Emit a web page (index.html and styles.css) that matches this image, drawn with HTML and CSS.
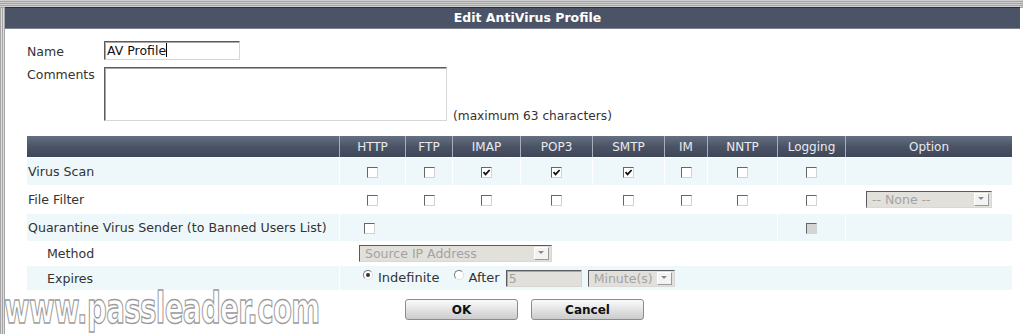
FILE: index.html
```html
<!DOCTYPE html>
<html lang="en">
<head>
  <meta charset="UTF-8">
  <title>Edit AntiVirus Profile</title>
  <link rel="stylesheet" href="styles.css">
</head>
<body>
  <div class="topbar"></div>
  <div class="frame">
    <div class="edge"></div>
    <div class="dialog">
      <div class="title">Edit AntiVirus Profile</div>
      <div class="content">
        <div class="meta">
          <span class="lbl">Name</span>
          <div class="field name">AV Profile<span class="caret"></span></div>
          <span class="lbl lbl-top">Comments</span>
          <div class="comments">
            <div class="field area"></div>
            <span class="hint">(maximum 63 characters)</span>
          </div>
        </div>

        <table class="grid">
          <colgroup>
            <col class="c-label"><col class="c-http"><col class="c-ftp"><col class="c-imap"><col class="c-pop3">
            <col class="c-smtp"><col class="c-im"><col class="c-nntp"><col class="c-log"><col class="c-opt">
          </colgroup>
          <thead>
            <tr>
              <th class="first"></th><th>HTTP</th><th>FTP</th><th>IMAP</th><th>POP3</th>
              <th>SMTP</th><th>IM</th><th>NNTP</th><th>Logging</th><th>Option</th>
            </tr>
          </thead>
          <tbody>
            <tr class="tint">
              <td class="name-cell">Virus Scan</td>
              <td><span class="cb"></span></td>
              <td><span class="cb"></span></td>
              <td><span class="cb on"><svg viewBox="0 0 9 9"><path d="M1.5 4.2 L3.6 6.4 L7.6 2" /></svg></span></td>
              <td><span class="cb on"><svg viewBox="0 0 9 9"><path d="M1.5 4.2 L3.6 6.4 L7.6 2" /></svg></span></td>
              <td><span class="cb on"><svg viewBox="0 0 9 9"><path d="M1.5 4.2 L3.6 6.4 L7.6 2" /></svg></span></td>
              <td><span class="cb"></span></td>
              <td><span class="cb"></span></td>
              <td><span class="cb"></span></td>
              <td></td>
            </tr>
            <tr>
              <td class="name-cell">File Filter</td>
              <td><span class="cb"></span></td>
              <td><span class="cb"></span></td>
              <td><span class="cb"></span></td>
              <td><span class="cb"></span></td>
              <td><span class="cb"></span></td>
              <td><span class="cb"></span></td>
              <td><span class="cb"></span></td>
              <td><span class="cb"></span></td>
              <td class="opt-cell"><span class="sel sel-none">-- None --<span class="arr"></span></span></td>
            </tr>
            <tr class="tint">
              <td class="name-cell">Quarantine Virus Sender (to Banned Users List)</td>
              <td colspan="7" class="left-cell"><span class="cb"></span></td>
              <td><span class="cb dis"></span></td>
              <td></td>
            </tr>
            <tr class="short">
              <td class="name-cell sub">Method</td>
              <td colspan="9" class="left-cell method-cell"><span class="sel sel-method">Source IP Address<span class="arr"></span></span></td>
            </tr>
            <tr class="tint short2">
              <td class="name-cell sub">Expires</td>
              <td colspan="9" class="left-cell expires-cell"><span class="radio on"></span><span class="rlabel first-opt">Indefinite</span><span class="radio"></span><span class="rlabel second-opt">After</span><span class="field num">5</span><span class="sel sel-unit">Minute(s)<span class="arr"></span></span></td>
            </tr>
          </tbody>
        </table>

        <div class="actions">
          <button class="btn">OK</button>
          <button class="btn">Cancel</button>
        </div>
      </div>
    </div>
  </div>
  <div class="watermark">www.passleader.com</div>
</body>
</html>
```

FILE: styles.css
```css
body {
  margin: 0;
  background: #fff;
  font-family: 'DejaVu Sans', Verdana, sans-serif;
  font-size: 12px;
  color: #333;
  width: 1023px;
  height: 334px;
  overflow: hidden;
  position: relative;
}
.topbar {
  height: 8px;
  background: repeating-linear-gradient(180deg, #cfcfcf 0px, #cfcfcf 1px, #a4a4a4 1px, #a4a4a4 2px);
}
.frame {
  display: flex;
  height: 326px;
}
.edge {
  width: 5px;
  flex: none;
  background: repeating-linear-gradient(90deg, #a5a5a5 0px, #a5a5a5 1px, #dcdcdc 1px, #dcdcdc 2px);
}
.dialog {
  flex: none;
  width: 1015px;
}
.title {
  height: 20px;
  line-height: 20px;
  background: #4b5467;
  border-top: 1px solid #2a2f3a;
  border-bottom: 1px solid #7d8390;
  color: #fff;
  font-weight: bold;
  font-size: 12.5px;
  text-align: center;
  padding-left: 30px;
  margin-top: -1px;
}
.content {
  padding: 12px 0 0 22px;
}
.meta {
  display: grid;
  grid-template-columns: 77px auto;
  row-gap: 7px;
  align-items: center;
}
.lbl {
  font-size: 12.5px;
  padding-top: 1px;
}
.lbl-top {
  align-self: start;
  padding-top: 0;
}
.field {
  box-sizing: border-box;
  border: 1px solid;
  border-color: #5c5c5c #d6d6d6 #d6d6d6 #5c5c5c;
  box-shadow: inset 1px 1px 0 #a8a8a8;
  background: #fff;
  color: #111;
}
.name {
  width: 136px;
  height: 19px;
  line-height: 17px;
  padding-left: 2px;
  font-size: 12.5px;
}
.caret {
  display: inline-block;
  width: 1px;
  height: 14px;
  background: #000;
  vertical-align: -2px;
}
.comments {
  display: flex;
  align-items: flex-end;
  gap: 6px;
}
.area {
  width: 343px;
  height: 54px;
}
.hint {
  line-height: 12px;
  margin-bottom: -1px;
  font-size: 12.2px;
}
.grid {
  margin-top: 15px;
  width: 985px;
  table-layout: fixed;
  border-collapse: separate;
  border-spacing: 0;
}
.c-label { width: 312px; }
.c-http { width: 66px; }
.c-ftp { width: 47px; }
.c-imap { width: 68px; }
.c-pop3 { width: 72px; }
.c-smtp { width: 72px; }
.c-im { width: 43px; }
.c-nntp { width: 70px; }
.c-log { width: 68px; }
.c-opt { width: 167px; }
.grid th {
  height: 21px;
  padding: 0;
  font-weight: normal;
  color: #e8eaef;
  background: linear-gradient(180deg, #667083 0%, #4b5466 50%, #3e4657 100%);
  border-left: 1px solid #a9aeb8;
  text-align: center;
}
.grid th.first {
  border-left: 0;
}
.grid td {
  height: 27px;
  padding: 0;
  border-top: 1px solid #fff;
  border-left: 1px solid #fff;
  text-align: center;
  vertical-align: middle;
}
.grid td.name-cell {
  border-left: 0;
  text-align: left;
  padding-left: 1px;
  color: #333;
  font-size: 12.6px;
  white-space: nowrap;
}
.grid td.sub {
  padding-left: 20px;
}
.grid tr.short td {
  height: 23px;
}
.grid tr.short2 td {
  height: 24px;
}
.tint td {
  background: #eef8fb;
}
.left-cell {
  text-align: left !important;
  padding-left: 24px !important;
}
.method-cell {
  padding-left: 19px !important;
}
.expires-cell {
  padding-left: 23px !important;
  white-space: nowrap;
}
.cb {
  display: inline-block;
  box-sizing: border-box;
  width: 11px;
  height: 11px;
  border: 1px solid;
  border-color: #666 #d2d2d2 #d2d2d2 #666;
  background: #fff;
  vertical-align: middle;
  position: relative;
}
.cb svg {
  display: block;
  width: 9px;
  height: 9px;
}
.cb svg path {
  fill: none;
  stroke: #111;
  stroke-width: 1.8;
}
.cb.dis {
  background: #d4d4d4;
}
.opt-cell {
  text-align: left !important;
  padding-left: 20px !important;
}
.sel {
  display: inline-flex;
  align-items: center;
  justify-content: space-between;
  box-sizing: border-box;
  height: 17px;
  border: 1px solid;
  border-color: #5a5a5a #d8d8d8 #d8d8d8 #5a5a5a;
  background: #e2e0db;
  color: #a3a3a3;
  padding-left: 5px;
  vertical-align: middle;
  line-height: 15px;
  font-size: 12.5px;
}
.sel .arr {
  width: 15px;
  height: 13px;
  margin-right: 2px;
  box-sizing: border-box;
  background: #f3f3f3;
  border: 1px solid;
  border-color: #fff #9a9a9a #9a9a9a #fff;
  position: relative;
}
.sel .arr::after {
  content: '';
  position: absolute;
  left: 3px;
  top: 3px;
  border-left: 3.5px solid transparent;
  border-right: 3.5px solid transparent;
  border-top: 3.5px solid #8a8a8a;
}
.sel-none { width: 126px; }
.sel-method { width: 193px; }
.sel-unit { width: 87px; margin-left: 6px; }
.radio {
  display: inline-block;
  box-sizing: border-box;
  width: 10px;
  height: 10px;
  border-radius: 50%;
  border: 1px solid;
  border-color: #777 #e0e0e0 #e0e0e0 #777;
  background: #fff;
  vertical-align: 2px;
  position: relative;
}
.radio.on::after {
  content: '';
  position: absolute;
  left: 2px;
  top: 2px;
  width: 4px;
  height: 4px;
  border-radius: 50%;
  background: #333;
}
.rlabel {
  font-size: 13px;
  margin: 0 9px 0 5px;
  color: #333;
}
.rlabel.first-opt {
  margin-right: 15px;
}
.rlabel.second-opt {
  margin-left: 4px;
  margin-right: 6px;
}
.num {
  display: inline-block;
  width: 76px;
  height: 17px;
  vertical-align: middle;
  background: #e2e0db;
  color: #a3a3a3;
  padding-left: 2px;
  line-height: 15px;
  font-size: 12.5px;
}
.actions {
  display: flex;
  gap: 13px;
  padding-left: 378px;
  margin-top: 9px;
}
.btn {
  width: 113px;
  height: 21px;
  border: 1px solid #8c8c8c;
  border-radius: 3px;
  background: linear-gradient(180deg, #fbfbfb 0%, #e6e6e6 45%, #cbcbcb 100%);
  font-family: 'DejaVu Sans', Verdana, sans-serif;
  font-size: 12px;
  font-weight: bold;
  color: #111;
  padding: 0;
}
.watermark {
  position: absolute;
  left: 4px;
  top: 294px;
  font-family: 'DejaVu Sans', sans-serif;
  font-weight: bold;
  font-size: 42px;
  line-height: 30px;
  color: #fff;
  -webkit-text-stroke: 1.4px #9c9c9c;
  letter-spacing: -1px;
  transform: scaleX(0.66);
  transform-origin: left top;
  white-space: nowrap;
}
```
